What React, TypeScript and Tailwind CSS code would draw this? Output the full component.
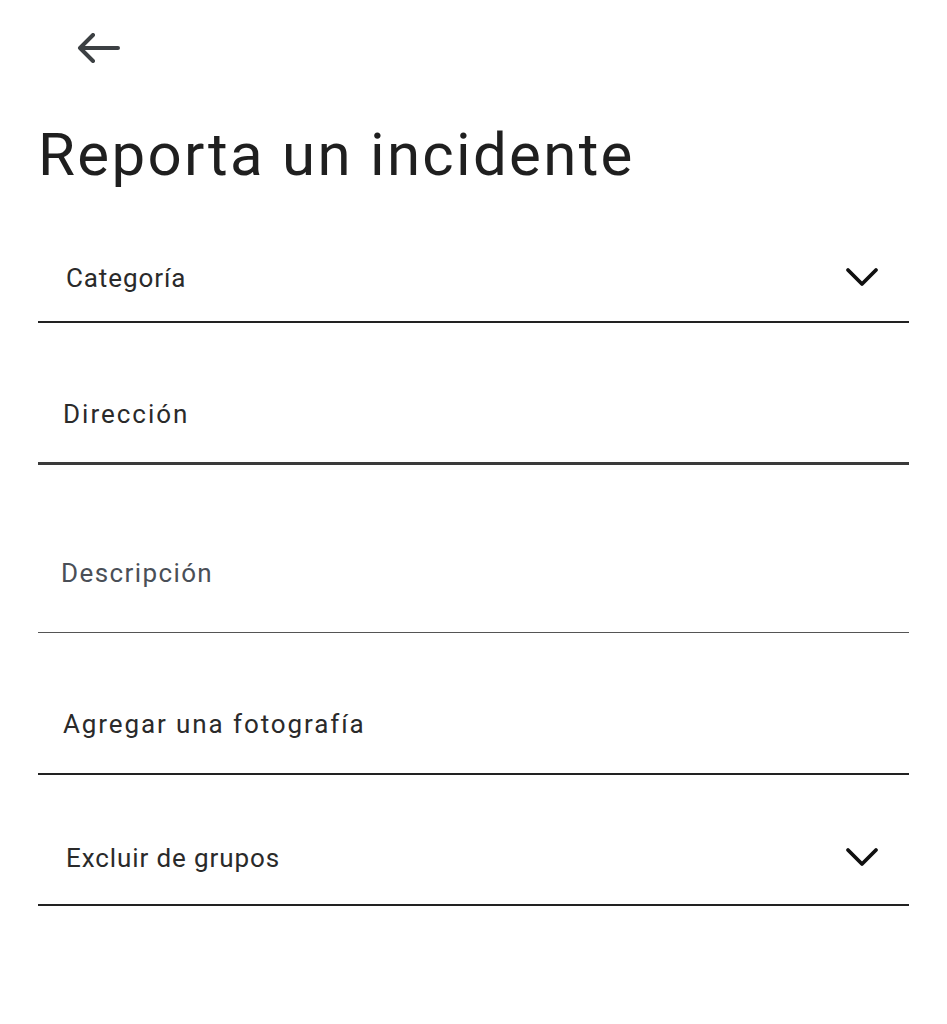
import React from 'react';

function BackArrow() {
  return (
    <svg width="44" height="30" viewBox="0 0 44 30" fill="none" className="text-[#3c4043]">
      <path d="M42 15H4M17 2L4 15l13 13" stroke="currentColor" strokeWidth="4" strokeLinecap="round" strokeLinejoin="round" />
    </svg>
  );
}

function Chevron() {
  return (
    <svg width="34" height="22" viewBox="0 0 34 22" fill="none" className="text-[#111]">
      <path d="M3 3l14 14L31 3" stroke="currentColor" strokeWidth="3.8" strokeLinecap="round" strokeLinejoin="round" />
    </svg>
  );
}

export default function App() {
  return (
    <div className="min-h-screen bg-white px-[38px] font-['Roboto',sans-serif]">
      {/* Top bar */}
      <div className="pt-[33px] pl-[38px]">
        <BackArrow />
      </div>

      <h1 className="mt-[62px] text-[60px] leading-none font-normal tracking-[2.3px] text-[#1f1f1f]">Reporta un incidente</h1>

      {/* Categoría */}
      <div className="h-[138px] border-b-2 border-[#222] pt-[80px]">
        <div className="flex items-center justify-between pl-[28px] pr-[30px]">
          <span className="text-[26px] leading-none tracking-[0.9px] text-[#2a2a2a]">Categoría</span>
          <Chevron />
        </div>
      </div>

      {/* Dirección */}
      <div className="h-[142px] border-b-[3px] border-[#3a3a3a] pt-[78px]">
        <span className="block pl-[25px] text-[26px] leading-none tracking-[2px] text-[#2a2a2a]">Dirección</span>
      </div>

      {/* Descripción */}
      <div className="h-[168px] border-b border-[#555] pt-[95px]">
        <span className="block pl-[23px] text-[26px] leading-none tracking-[1.4px] text-[#4a4f57]">Descripción</span>
      </div>

      {/* Agregar una fotografía */}
      <div className="h-[142px] border-b-2 border-[#222] pt-[78px]">
        <span className="block pl-[25px] text-[26px] leading-none tracking-[1.9px] text-[#2a2a2a]">Agregar una fotografía</span>
      </div>

      {/* Excluir de grupos */}
      <div className="h-[131px] border-b-2 border-[#222] pt-[70px]">
        <div className="flex items-center justify-between pl-[28px] pr-[30px]">
          <span className="text-[26px] leading-none tracking-[0.9px] text-[#2a2a2a]">Excluir de grupos</span>
          <Chevron />
        </div>
      </div>
    </div>
  );
}
